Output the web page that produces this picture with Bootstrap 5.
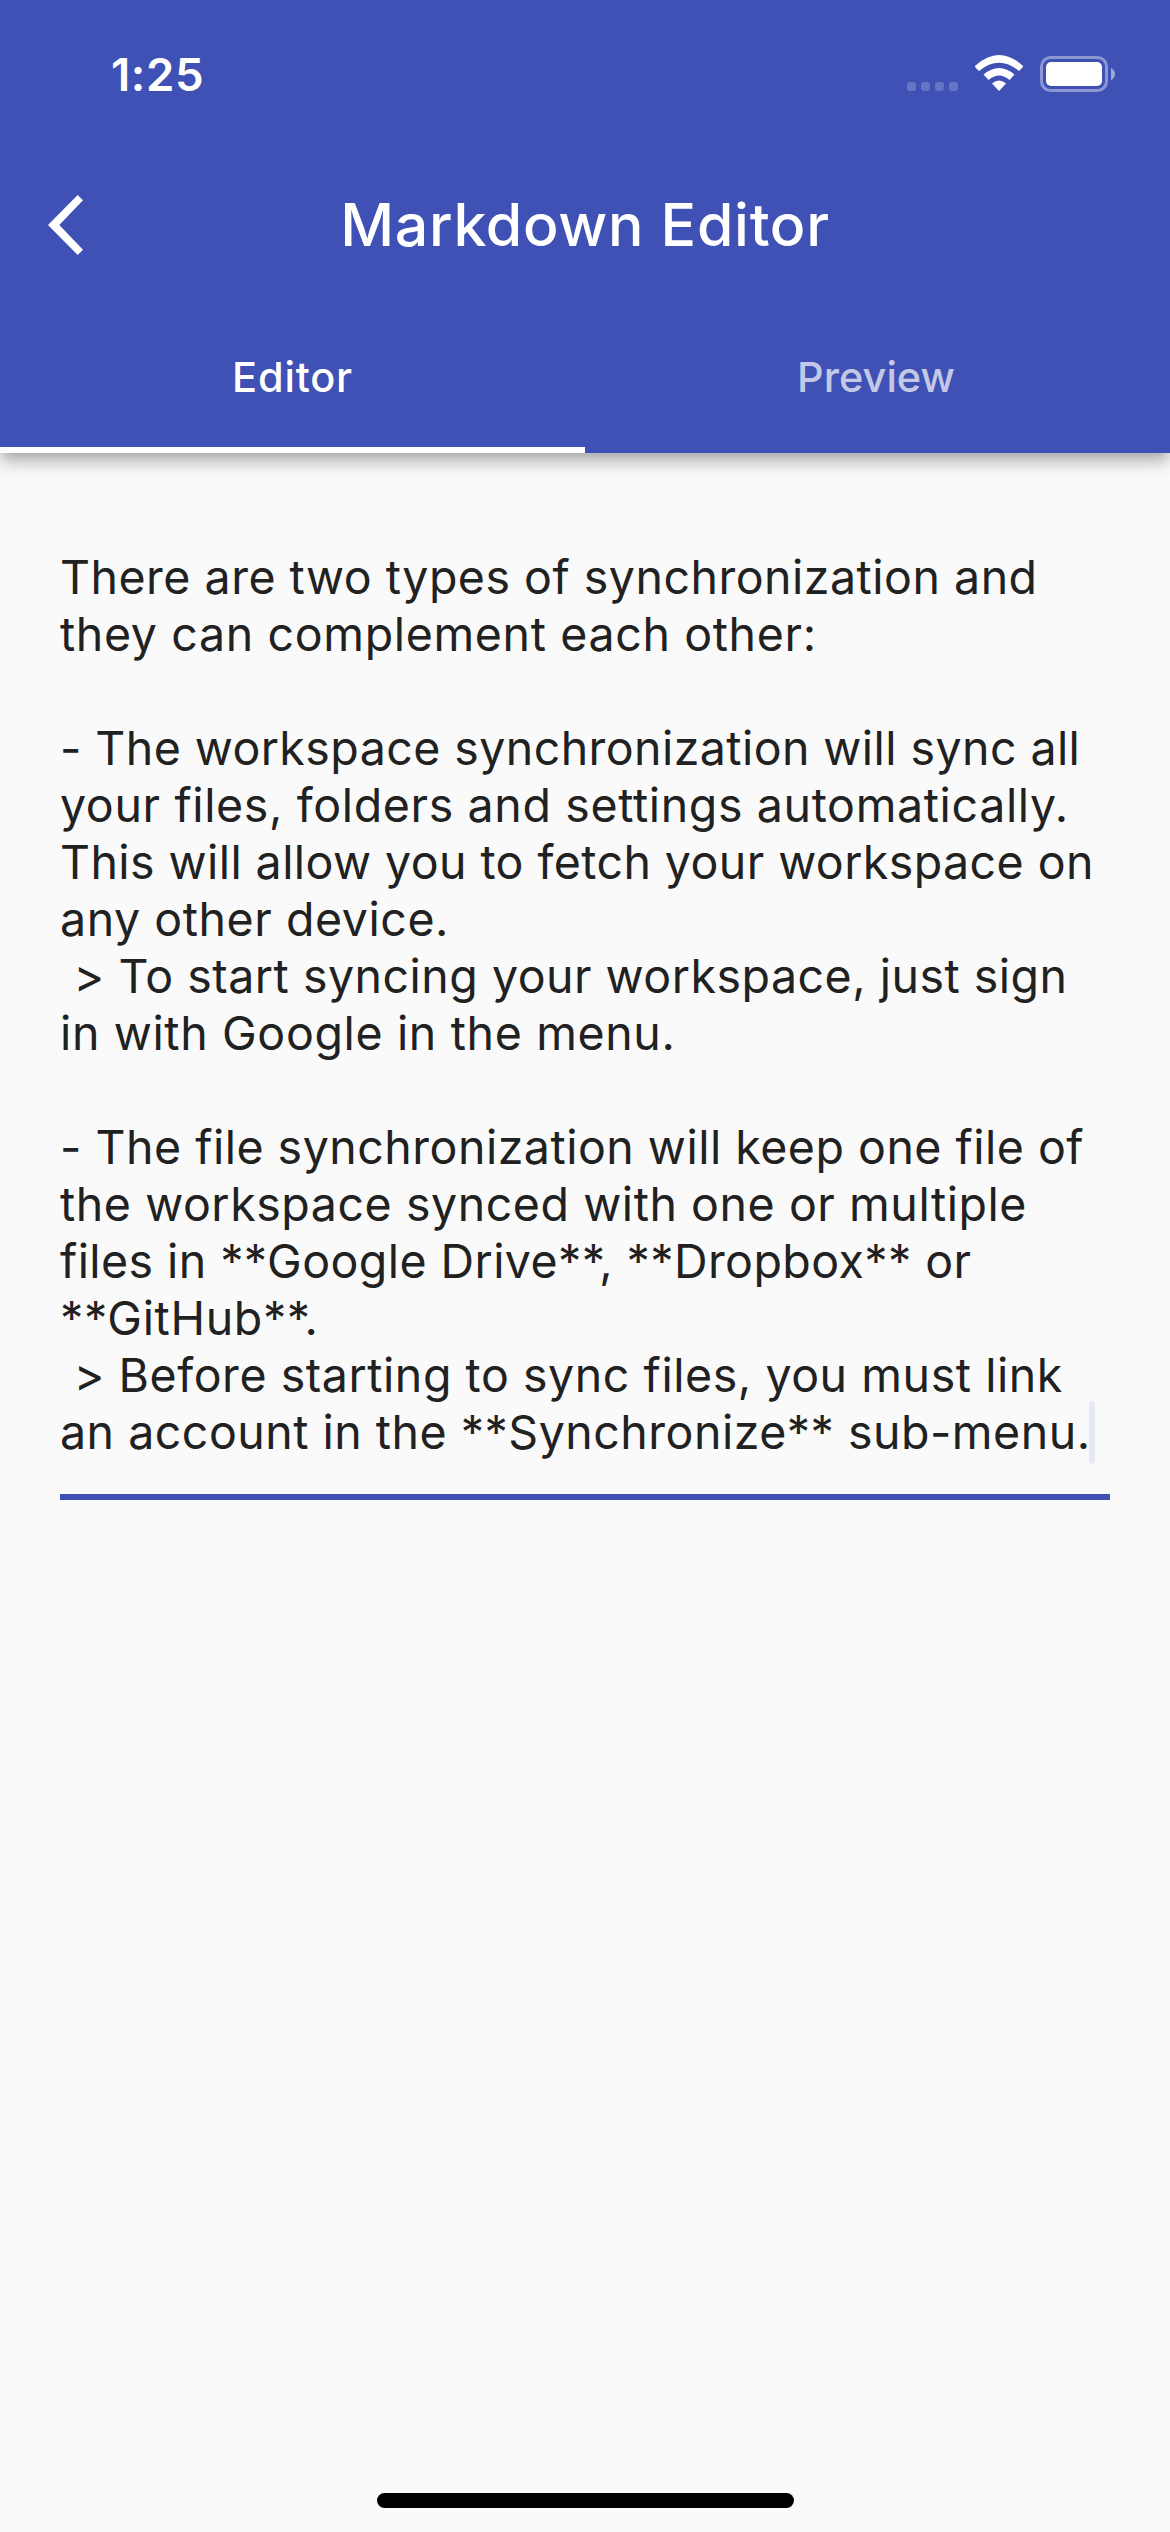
<!DOCTYPE html>
<html lang="en">
<head>
<meta charset="utf-8">
<meta name="viewport" content="width=device-width, initial-scale=1">
<title>Markdown Editor</title>
<link rel="stylesheet" href="https://cdn.jsdelivr.net/npm/bootstrap@5.3.0/dist/css/bootstrap.min.css">
<style>
  body { background: #fafafa; color: #212121; font-family: Inter, "Liberation Sans", sans-serif; }
  .screen { min-height: 2532px; }
  .app-header { height: 453px; background: #3f51b5; color: #fff; box-shadow: 0 6px 12px -3px rgba(0,0,0,.2), 0 12px 15px 0 rgba(0,0,0,.14), 0 3px 24px 0 rgba(0,0,0,.08); }
  .status-bar { height: 141px; padding: 49px 55px 0 111px; }
  .clock { font-size: 45.5px; font-weight: 600; line-height: 51px; letter-spacing: .6px; }
  .title-bar { height: 168px; }
  .back-btn { width: 168px; padding-left: 48px; }
  .page-title { font-size: 59px; font-weight: 500; line-height: 168px; letter-spacing: .7px; margin: 0; }
  .tab-strip { height: 144px; }
  .tab-strip .nav-link { height: 144px; line-height: 136px; padding: 0 3px 0 0; border-radius: 0; font-size: 41.5px; font-weight: 500; color: rgba(255,255,255,.7); border-bottom: 6px solid transparent; }
  .tab-strip .nav-link.active { color: #fff; border-bottom-color: #fff; letter-spacing: .8px; padding-right: 0; }
  .editor { margin: 96px 60px 0; border-bottom: 6px solid #3f51b5; height: 951px; }
  .editor-text { font-size: 46.5px; line-height: 57px; letter-spacing: .5px; white-space: pre; }
  .ls-tight { letter-spacing: .43px; }
  .ls-mid { letter-spacing: .56px; }
  .ls-wide { letter-spacing: .64px; }
  .caret { display: inline-block; width: 6px; height: 63px; border-radius: 3px; background: #e5e8f5; margin: -3px 0 -3px -1.5px; vertical-align: -11.6px; }
  .home-bar { width: 417px; height: 15px; border-radius: 8px; background: #000; margin-bottom: 24px; }
</style>
<script src="https://cdn.jsdelivr.net/npm/bootstrap@5.3.0/dist/js/bootstrap.bundle.min.js"></script>
</head>
<body>
<div class="screen d-flex flex-column">
  <header class="app-header">
    <div class="status-bar d-flex justify-content-between align-items-start">
      <span class="clock">1:25</span>
      <svg width="208" height="48" viewBox="907 49 208 48" fill="#fff" aria-label="Wi-Fi, battery full">
        <g opacity=".2"><rect x="907" y="82" width="9" height="9" rx="3"/><rect x="921" y="82" width="9" height="9" rx="3"/><rect x="935" y="82" width="9" height="9" rx="3"/><rect x="949" y="82" width="9" height="9" rx="3"/></g>
        <path d="M975.500 65.500Q999 44.500 1022.500 65.500Q1023.500 66.500 1022.500 67.500L1019 71Q999 54.500 979 71L975.500 67.500Q974.500 66.500 975.500 65.500Z"/>
        <path d="M983.500 74.500Q999 61.500 1014.500 74.500L1009.500 80Q999 71 988.500 80Z"/>
        <path d="M992 83.500Q999 77.500 1006 83.500L999 91Z"/>
        <rect x="1041.500" y="57.500" width="65" height="33" rx="9" fill="none" stroke="#fff" stroke-width="3" opacity=".4"/>
        <rect x="1046" y="62" width="56" height="24" rx="5"/>
        <path d="M1111 68Q1115 70 1115 74T1111 80Z" opacity=".5"/>
      </svg>
    </div>
    <div class="title-bar d-flex align-items-center">
      <div class="back-btn"><svg class="d-block" width="36" height="60" viewBox="48 195 36 60" fill="#fff" aria-label="Back"><path d="M48 225L77.700 195L83 200.300L59.300 225L83 249.700L77.700 255Z"/></svg></div>
      <h1 class="page-title flex-grow-1 text-center">Markdown Editor</h1>
      <div class="back-btn"></div>
    </div>
    <nav class="tab-strip nav nav-fill flex-nowrap">
      <a class="nav-link nav-item w-50 active" href="#">Editor</a>
      <a class="nav-link nav-item w-50" href="#">Preview</a>
    </nav>
  </header>
  <main class="editor">
    <div class="editor-text"><div>There are two types of synchronization and</div><div class="ls-wide">they can complement each other:</div><br><div class="ls-tight">- The workspace synchronization will sync all</div><div class="ls-wide">your files, folders and settings automatically.</div><div class="ls-tight">This will allow you to fetch your workspace on</div><div class="ls-mid">any other device.</div><div> &gt; To start syncing your workspace, just sign</div><div class="ls-wide">in with Google in the menu.</div><br><div>- The file synchronization will keep one file of</div><div class="ls-mid">the workspace synced with one or multiple</div><div class="ls-tight">files in **Google Drive**, **Dropbox** or</div><div class="ls-wide">**GitHub**.</div><div class="ls-mid"> &gt; Before starting to sync files, you must link</div><div>an account in the **Synchronize** sub-menu.<span class="caret"></span></div></div>
  </main>
  <div class="home-bar mt-auto mx-auto"></div>
</div>
</body>
</html>
